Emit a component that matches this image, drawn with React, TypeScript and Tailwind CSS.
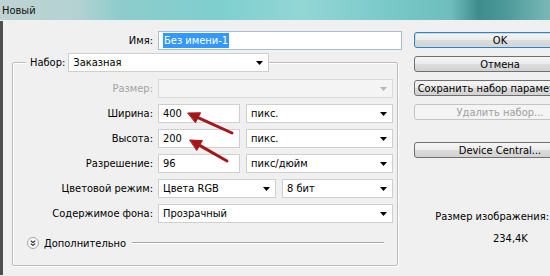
import React from "react";

function Arrow() {
  return (
    <svg width="7" height="4" viewBox="0 0 7 4" className="shrink-0">
      <path d="M0 0H7L3.5 4Z" fill="#000" />
    </svg>
  );
}

function DisabledArrow() {
  return (
    <svg width="7" height="4" viewBox="0 0 7 4" className="shrink-0">
      <path d="M0 0H7L3.5 4Z" fill="#b5b5b5" />
    </svg>
  );
}

function Select({ cls, text }: { cls: string; text: string }) {
  return (
    <div className={`flex items-center justify-between h-[19px] border border-[#cfcfcf] bg-white pl-[4px] pr-[5px] ${cls}`}>
      <span>{text}</span>
      <Arrow />
    </div>
  );
}

function Field({ cls, text }: { cls: string; text: string }) {
  return (
    <div className={`flex items-center h-[19px] border border-[#cfcfcf] bg-white pl-[4px] ${cls}`}>
      <span>{text}</span>
    </div>
  );
}

function Row({ label, children, disabled }: { label: string; children: React.ReactNode; disabled?: boolean }) {
  return (
    <div className="flex items-center h-[19px]">
      <div className={`w-[140px] text-right ${disabled ? "text-[#a3a3a3]" : "text-black"}`}>{label}</div>
      <div className="ml-[5px] flex items-center gap-[6px]">{children}</div>
    </div>
  );
}

function Btn({ text, primary, disabled }: { text: string; primary?: boolean; disabled?: boolean }) {
  const base = "flex items-center justify-center h-[16px] w-[172px] rounded-[3px] border whitespace-nowrap";
  if (disabled)
    return <div className={`${base} border-[#c4c4c4] bg-[#f4f4f4] text-[#a0a0a0]`}>{text}</div>;
  if (primary)
    return (
      <div className={`${base} border-[#3c7fb1] bg-[linear-gradient(180deg,#f6f6f6_0%,#ebebeb_50%,#dcdcdc_51%,#d4d4d4_100%)] shadow-[inset_0_0_0_1px_#bfe0f4] text-black`}>
        {text}
      </div>
    );
  return (
    <div className={`${base} border-[#707070] bg-[linear-gradient(180deg,#f6f6f6_0%,#ebebeb_50%,#dcdcdc_51%,#d2d2d2_100%)] text-black`}>
      {text}
    </div>
  );
}

export default function App() {
  return (
    <div className="relative w-[550px] h-[276px] overflow-hidden bg-[#f0f0f0] text-[11px] leading-none text-black [font-family:'DejaVu_Sans_Condensed','Liberation_Sans',Arial,sans-serif]">
      {/* Title bar */}
      <div className="h-[21px] flex items-center pl-[2px] bg-[linear-gradient(90deg,#bfd3d3_0%,#b4d2d2_14%,#8dcccc_22%,#7fcfcf_40%,#93d6d6_55%,#78c8c8_72%,#6fbdbd_82%,#3e8c8c_87%,#4d9a9a_92%,#7bb8b8_100%)] border-b border-[#e8f0f0]">
        <span className="text-[11px] text-[#111]">Новый</span>
      </div>

      <div className="flex h-[254px]">
        <div className="w-[3px] shrink-0 bg-[#4f4f4f]" />

        {/* Left column */}
        <div className="w-[411px] shrink-0 flex flex-col">
          {/* Name */}
          <div className="mt-[10px] flex items-center h-[19px]">
            <div className="w-[150px] text-right">Имя:</div>
            <div className="ml-[5px] flex items-center h-[19px] w-[244px] border border-[#a9bdd3] bg-white pl-[4px]">
              <span className="bg-[#3399ff] text-white px-[1px] py-[2px]">Без имени-1</span>
            </div>
          </div>

          {/* Group box */}
          <div className="mt-[12px] ml-[9px] w-[386px] h-[204px] border border-[#bdbdbd] rounded-[2px] shadow-[inset_1px_1px_0_#ffffff,1px_1px_0_#ffffff] flex flex-col">
            <div className="-mt-[10px] ml-[13px] flex items-center h-[19px]">
              <span className="bg-[#f0f0f0] px-[4px] h-[19px] flex items-center">Набор:</span>
              <Select cls="w-[201px] ml-[-1px]" text="Заказная" />
            </div>

            <div className="mt-[7px] flex flex-col gap-[6px]">
              <Row label="Размер:" disabled>
                <div className="flex items-center justify-end h-[19px] w-[235px] border border-[#d9d9d9] bg-[#f4f4f4] pr-[5px]">
                  <DisabledArrow />
                </div>
              </Row>
              <Row label="Ширина:">
                <Field cls="w-[82px]" text="400" />
                <Select cls="w-[147px]" text="пикс." />
              </Row>
              <Row label="Высота:">
                <Field cls="w-[82px]" text="200" />
                <Select cls="w-[147px]" text="пикс." />
              </Row>
              <Row label="Разрешение:">
                <Field cls="w-[82px]" text="96" />
                <Select cls="w-[147px]" text="пикс/дюйм" />
              </Row>
              <Row label="Цветовой режим:">
                <Select cls="w-[118px]" text="Цвета RGB" />
                <Select cls="w-[111px]" text="8 бит" />
              </Row>
              <Row label="Содержимое фона:">
                <Select cls="w-[235px]" text="Прозрачный" />
              </Row>
            </div>

            <div className="mt-[14px] ml-[14px] mr-[13px] flex items-center h-[12px]">
              <svg width="12" height="12" viewBox="0 0 12 12" className="shrink-0">
                <circle cx="6" cy="6" r="5.5" fill="#fbfbfb" stroke="#a5a5a5" />
                <path d="M3.8 3.8L6 5.6L8.2 3.8M3.8 6.6L6 8.4L8.2 6.6" fill="none" stroke="#222" strokeWidth="1.1" />
              </svg>
              <span className="ml-[5px]">Дополнительно</span>
              <div className="ml-[6px] flex-1 h-[2px] border-t border-[#a7a7a7] border-b-white border-b" />
            </div>
          </div>
        </div>

        {/* Right column */}
        <div className="w-[172px] shrink-0 flex flex-col">
          <div className="mt-[11px] flex flex-col gap-[8px]">
            <Btn text="OK" primary />
            <Btn text="Отмена" />
            <Btn text="Сохранить набор параметров..." />
            <Btn text="Удалить набор..." disabled />
          </div>
          <div className="mt-[22px]">
            <Btn text="Device Central..." />
          </div>
          <div className="mt-[53px] flex flex-col gap-[11px]">
            <div className="flex justify-end pr-[37px] whitespace-nowrap">
              <span>Размер изображения:</span>
            </div>
            <div className="pl-[79px]">
              <span>234,4K</span>
            </div>
          </div>
        </div>
      </div>

      {/* Red arrows */}
      <svg className="absolute inset-0 pointer-events-none" width="550" height="276" viewBox="0 0 550 276">
        <g stroke="#a3161b" strokeWidth="3" strokeLinecap="round" fill="#a3161b">
          <line x1="232" y1="133" x2="198" y2="117.6" />
          <path d="M188 113L200.6 112.8L195.6 122.4Z" strokeWidth="1" />
          <line x1="227" y1="161" x2="199.6" y2="145.4" />
          <path d="M190 140L202.4 140.6L196.9 150.2Z" strokeWidth="1" />
        </g>
      </svg>
    </div>
  );
}
